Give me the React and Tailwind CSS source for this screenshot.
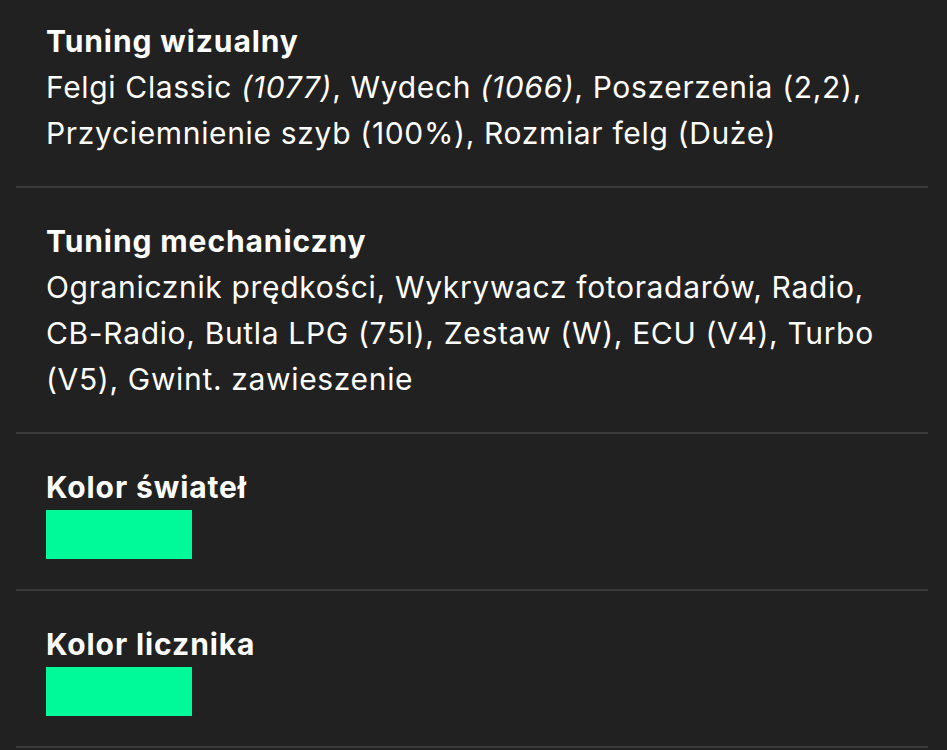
export default function App() {
  return (
    <div
      className="min-h-screen bg-[#212121] pl-4 pr-[19px] text-white"
      style={{ fontFamily: 'Inter, "Noto Sans", sans-serif' }}
    >
      {/* Tuning wizualny */}
      <section className="border-b-2 border-[#3a3a3a] pt-[18px] pb-[30px] px-[30px] text-[30px] leading-[46px] tracking-[0.022em]">
        <h3 className="font-bold tracking-[0.03em]">Tuning wizualny</h3>
        <p>
          Felgi Classic <i>(1077)</i>, Wydech <i>(1066)</i>, Poszerzenia (2,2), Przyciemnienie szyb
          (100%), Rozmiar felg (Duże)
        </p>
      </section>

      {/* Tuning mechaniczny */}
      <section className="border-b-2 border-[#3a3a3a] py-[30px] px-[30px] text-[30px] leading-[46px] tracking-[0.022em]">
        <h3 className="font-bold tracking-[0.03em]">Tuning mechaniczny</h3>
        <p>
          Ogranicznik prędkości, Wykrywacz fotoradarów, Radio,{' '}
          <span className="whitespace-nowrap">CB-Radio</span>, Butla LPG (75l), Zestaw (W), ECU (V4),
          Turbo (V5), Gwint. zawieszenie
        </p>
      </section>

      {/* Kolor świateł */}
      <section className="border-b-2 border-[#3a3a3a] py-[30px] px-[30px] text-[30px] leading-[46px]">
        <h3 className="font-bold tracking-[0.03em]">Kolor świateł</h3>
        <div className="h-[49px] w-[146px] bg-[#00fa9a]" />
      </section>

      {/* Kolor licznika */}
      <section className="border-b-2 border-[#3a3a3a] py-[30px] px-[30px] text-[30px] leading-[46px]">
        <h3 className="font-bold tracking-[0.03em]">Kolor licznika</h3>
        <div className="h-[49px] w-[146px] bg-[#00fa9a]" />
      </section>
    </div>
  );
}
